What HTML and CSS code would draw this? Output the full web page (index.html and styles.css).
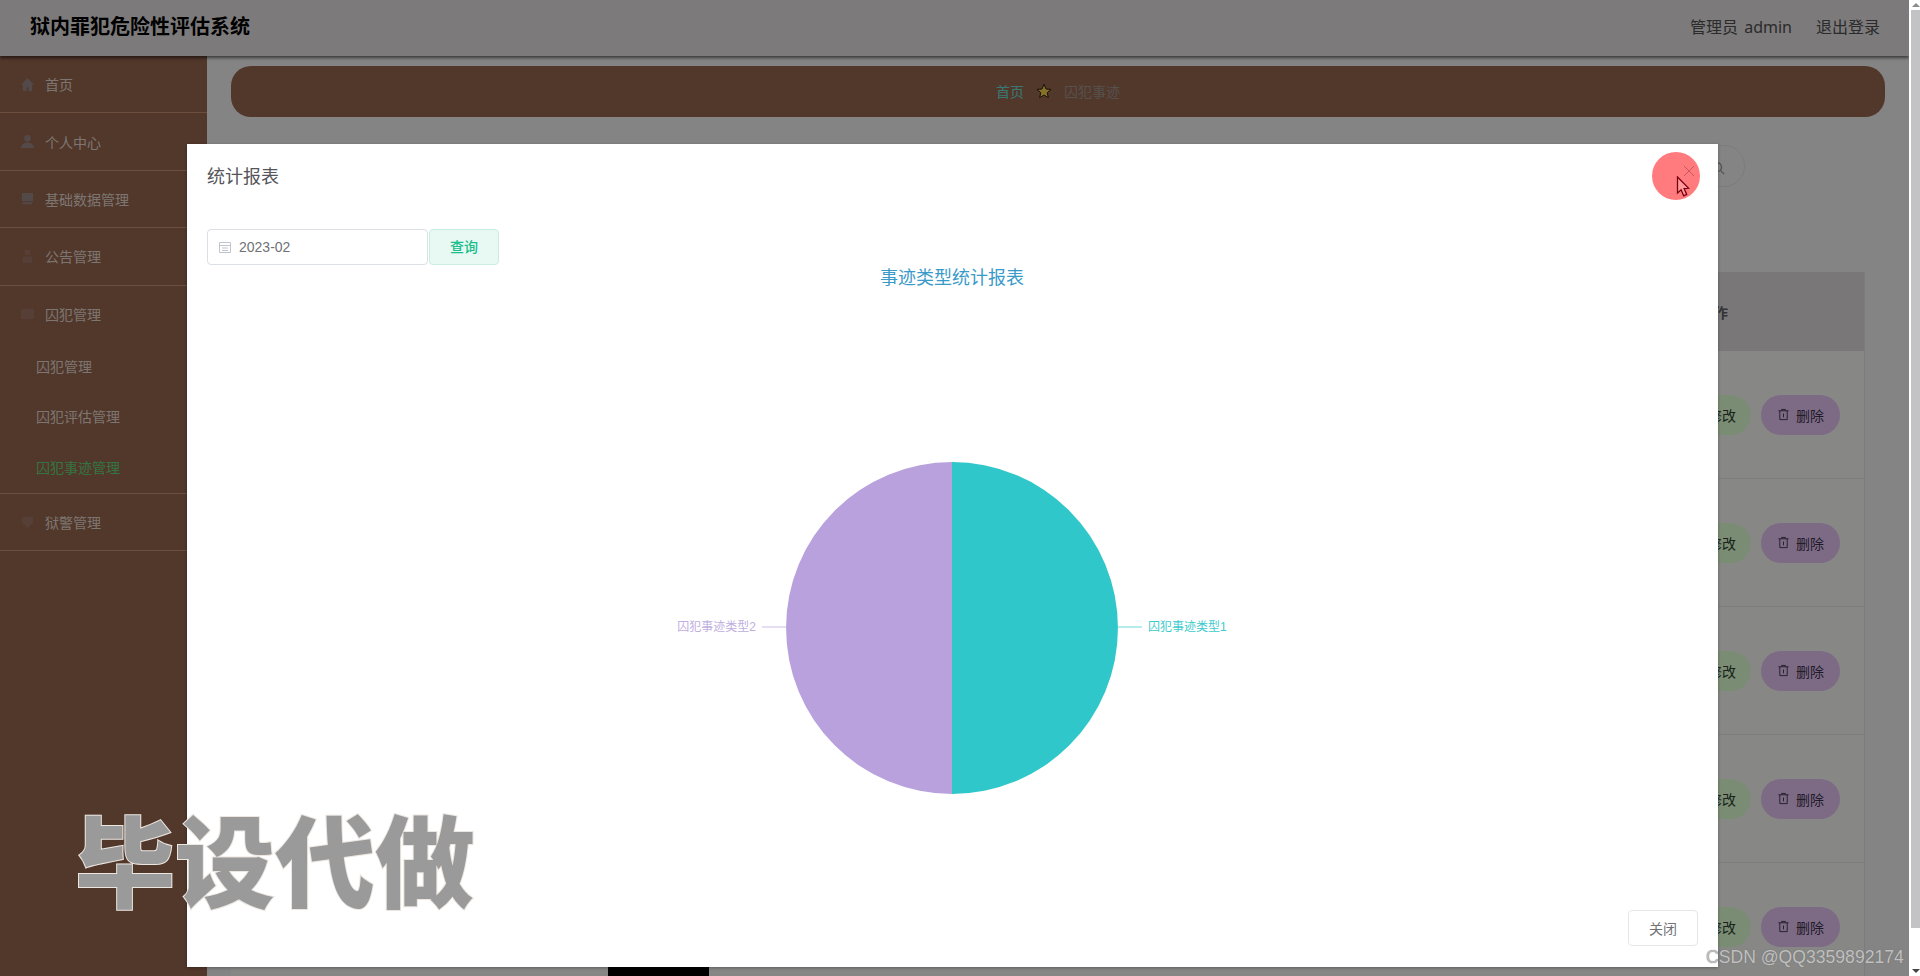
FILE: index.html
```html
<!DOCTYPE html>
<html lang="zh-CN">
<head>
<meta charset="utf-8">
<title>狱内罪犯危险性评估系统</title>
<link rel="stylesheet" href="styles.css">
</head>
<body>
<div class="window">
  <div class="viewport">
    <header class="topbar">
      <div class="brand">狱内罪犯危险性评估系统</div>
      <div class="user"><span>管理员 admin</span><span>退出登录</span></div>
    </header>
    <div class="shell">
      <aside class="sidebar">
        <div class="nav-item"><svg class="nav-icon icon-blue" viewBox="0 0 16 16"><path d="M8 1 1 8h2v7h4v-4h2v4h4V8h2z"/></svg>首页</div>
        <div class="nav-item"><svg class="nav-icon icon-blue" viewBox="0 0 16 16"><circle cx="8" cy="4.5" r="3.5"/><path d="M1 15c0-4 3-6 7-6s7 2 7 6z"/></svg>个人中心</div>
        <div class="nav-item"><svg class="nav-icon icon-blue" viewBox="0 0 16 16"><path d="M2 2h12v9H2zM3 12h10v2H3z"/></svg>基础数据管理</div>
        <div class="nav-item"><svg class="nav-icon icon-dark" viewBox="0 0 16 16"><path d="M5 1h6v5H5zM3 8h10v7H3z"/></svg>公告管理</div>
        <div class="nav-group">
          <div class="nav-head"><svg class="nav-icon icon-dark" viewBox="0 0 16 16"><path d="M1 3h14v11H1z"/></svg>囚犯管理</div>
          <div class="nav-sub">囚犯管理</div>
          <div class="nav-sub">囚犯评估管理</div>
          <div class="nav-sub nav-sub-active">囚犯事迹管理</div>
        </div>
        <div class="nav-item"><svg class="nav-icon icon-dark" viewBox="0 0 16 16"><path d="M2 2h12v6l-6 6-6-6z"/></svg>狱警管理</div>
      </aside>
      <main class="content">
        <nav class="crumbs">
          <span class="crumb-home">首页</span>
          <svg class="crumb-star" viewBox="0 0 16 16"><path d="M8 1.2 10 6l5 .4-3.8 3.3 1.2 5L8 12l-4.4 2.7 1.2-5L1 6.4 6 6z"/></svg>
          <span class="crumb-page">囚犯事迹</span>
        </nav>
        <div class="search-row">
          <button class="search-btn"><svg class="search-icon" viewBox="0 0 16 16"><circle cx="7" cy="7" r="5"/><path d="m11 11 4 4"/></svg></button>
        </div>
        <div class="table">
          <div class="table-head"><span class="col-ops">操作</span></div>
          <div class="table-row"><div class="ops"><button class="pill pill-green">修改</button><button class="pill pill-purple"><svg class="trash" viewBox="0 0 14 14"><path d="M1.5 3h11M5 3V1.5h4V3M3 3v9.5h8V3M7 6v4"/></svg>删除</button></div></div>
          <div class="table-row"><div class="ops"><button class="pill pill-green">修改</button><button class="pill pill-purple"><svg class="trash" viewBox="0 0 14 14"><path d="M1.5 3h11M5 3V1.5h4V3M3 3v9.5h8V3M7 6v4"/></svg>删除</button></div></div>
          <div class="table-row"><div class="ops"><button class="pill pill-green">修改</button><button class="pill pill-purple"><svg class="trash" viewBox="0 0 14 14"><path d="M1.5 3h11M5 3V1.5h4V3M3 3v9.5h8V3M7 6v4"/></svg>删除</button></div></div>
          <div class="table-row"><div class="ops"><button class="pill pill-green">修改</button><button class="pill pill-purple"><svg class="trash" viewBox="0 0 14 14"><path d="M1.5 3h11M5 3V1.5h4V3M3 3v9.5h8V3M7 6v4"/></svg>删除</button></div></div>
          <div class="table-row"><div class="ops"><button class="pill pill-green">修改</button><button class="pill pill-purple"><svg class="trash" viewBox="0 0 14 14"><path d="M1.5 3h11M5 3V1.5h4V3M3 3v9.5h8V3M7 6v4"/></svg>删除</button></div></div>
        </div>
      </main>
    </div>
    <div class="black-strip"></div>
    <div class="overlay"></div>
    <section class="modal">
      <div class="modal-title">统计报表</div>
      <div class="modal-form">
        <div class="date-input">
          <svg class="cal-icon" viewBox="0 0 14 14"><path d="M1.5 2.5h11v10h-11zM1.5 5.5h11M4 8h6M4 10.5h6"/></svg>
          <span>2023-02</span>
        </div>
        <button class="query-btn">查询</button>
      </div>
      <div class="chart-wrap">
        <svg class="chart" viewBox="0 0 1491 640" width="1491" height="640">
          <text class="chart-title" x="745" y="19" text-anchor="middle">事迹类型统计报表</text>
          <path class="slice-purple" d="M745 197a166 166 0 0 0 0 332z"/>
          <path class="slice-teal" d="M745 197a166 166 0 0 1 0 332z"/>
          <path class="line-purple" d="M555 362h24"/>
          <path class="line-teal" d="M911 362h24"/>
          <text class="label-purple" x="549" y="366" text-anchor="end">囚犯事迹类型2</text>
          <text class="label-teal" x="941" y="366">囚犯事迹类型1</text>
        </svg>
      </div>
      <div class="modal-footer"><button class="close-btn">关闭</button></div>
    </section>
    <div class="click-halo">
      <svg class="close-x" viewBox="0 0 12 12"><path d="m1 1 10 10M11 1 1 11"/></svg>
      <svg class="cursor" viewBox="0 0 14 22"><path d="M1.5 1v16l3.6-3.2 2.6 6 3-1.4-2.6-5.8 4.6-.3z"/></svg>
    </div>
    <div class="promo">毕设代做</div>
    <div class="csdn">CSDN @QQ3359892174</div>
  </div>
  <div class="scrollbar">
    <span class="arrow arrow-up"></span>
    <div class="thumb"></div>
    <span class="arrow arrow-down"></span>
  </div>
</div>
</body>
</html>
```
FILE: styles.css
```css
* { box-sizing: border-box; }
html, body { margin: 0; height: 100%; overflow: hidden; }
body { font-family: "Liberation Sans", "Noto Sans CJK SC", sans-serif; background: #fff; }
button { font-family: inherit; }

.window { display: flex; width: 1920px; height: 976px; }
.viewport { position: relative; width: 1909px; height: 976px; overflow: hidden; background: #dcdcdc; display: flex; flex-direction: column; }

.scrollbar { width: 11px; padding-left: 2px; background: #fff; display: flex; flex-direction: column; align-items: center; }
.thumb { width: 9px; height: 918px; background: #c3c3c6; }
.arrow { width: 0; height: 0; border-left: 4px solid transparent; border-right: 4px solid transparent; }
.arrow-up { margin: 3px 0 3px; border-bottom: 4px solid #8c8c8c; }
.arrow-down { margin-top: auto; margin-bottom: 3px; border-top: 4px solid #444; }

.topbar { position: relative; z-index: 1; flex: none; height: 56px; padding: 0 29px 5px 30px; display: flex; align-items: center; justify-content: space-between; background: #cfcccd; box-shadow: 0 2px 3px rgba(0,0,0,.55); }
.brand { font-size: 20px; font-weight: 700; color: #000; }
.user { display: flex; gap: 24px; font-family: "Noto Sans", "Noto Sans CJK SC", sans-serif; font-size: 16px; word-spacing: 2px; color: #484848; }

.shell { flex: 1; display: flex; min-height: 0; }
.sidebar { flex: none; width: 207px; background: #895c48; color: #cfc4bd; font-size: 14px; }
.nav-item { height: 57.4px; display: flex; align-items: center; padding-left: 20px; border-bottom: 1px solid #b58269; }
.nav-group { border-bottom: 1px solid #b58269; }
.nav-head { height: 56px; display: flex; align-items: center; padding-left: 20px; }
.nav-icon { width: 15px; height: 15px; margin-right: 10px; flex: none; }
.icon-blue { fill: #8a7a78; }
.icon-dark { fill: #90695a; }
.nav-sub { height: 50.5px; line-height: 51px; padding-left: 36px; }
.nav-sub-active { color: #55c46e; }

.content { flex: 1; min-width: 0; padding: 10px 24px 0; }
.crumbs { height: 51px; padding-bottom: 2px; display: flex; align-items: center; justify-content: center; gap: 12px; border-radius: 20px; background: #895c48; font-size: 14px; }
.crumb-home { color: #5fc8c2; }
.crumb-star { width: 16px; height: 16px; fill: #e0bd45; stroke: #2a1a10; stroke-width: 1; }
.crumb-page { color: #8f8783; }

.search-row { display: flex; justify-content: flex-end; margin-top: 28px; padding-right: 140px; }
.search-btn { width: 60px; height: 42px; padding: 4px 0 0 6px; display: flex; align-items: center; justify-content: center; border: 1px solid #cfcfcf; border-radius: 21px; background: transparent; }
.search-icon { width: 14px; height: 14px; fill: none; stroke: #8a8a8a; stroke-width: 1.6; }

.table { width: 1634px; margin-top: 85px; background: #e1e1df; border-right: 1px solid #cfcfcf; }
.table-head { height: 79px; display: flex; align-items: center; justify-content: flex-end; background: #cbc6c8; color: #555; font-size: 14px; }
.col-ops { width: 300px; text-align: center; font-weight: 700; }
.table-row { height: 128px; padding-top: 44px; border-bottom: 1px solid #d0d0d0; }
.ops { display: flex; justify-content: flex-end; gap: 10px; padding-right: 24px; }
.pill { height: 40px; padding-bottom: 2px; display: flex; align-items: center; justify-content: center; border: 0; border-radius: 20px; font-size: 14px; }
.pill-green { width: 92px; padding-left: 40px; background: #cdeac4; color: #2a3a2a; }
.pill-purple { width: 79px; background: #d0b2e0; color: #3a2e44; }
.trash { width: 13px; height: 13px; margin-right: 6px; fill: none; stroke: #3a2e44; stroke-width: 1; }

.black-strip { position: absolute; left: 608px; top: 966px; width: 101px; height: 10px; background: #000; }

.overlay { position: absolute; inset: 0; z-index: 2; background: rgba(0,0,0,.4); }

.modal { position: absolute; z-index: 3; left: 187px; top: 144px; width: 1531px; height: 823px; padding: 0 20px; display: flex; flex-direction: column; background: #fff; box-shadow: 0 1px 3px rgba(0,0,0,.3); }
.modal-title { flex: none; height: 32px; margin-top: 17px; font-size: 18px; line-height: 32px; color: #55555a; }
.modal-form { flex: none; display: flex; margin-top: 36px; height: 36px; }
.date-input { width: 221px; height: 36px; display: flex; align-items: center; padding-left: 10px; border: 1px solid #dcdfe6; border-radius: 4px; font-size: 14px; color: #707276; }
.cal-icon { width: 14px; height: 14px; margin-right: 7px; fill: none; stroke: #c0c4cc; stroke-width: 1; }
.query-btn { width: 70px; height: 36px; padding: 0 0 2px; margin-left: 1px; border: 1px solid #c9eee1; border-radius: 4px; background: #e8f8f3; color: #19be8c; font-size: 14px; font-weight: 500; }
.chart-wrap { flex: 1; min-height: 0; overflow: hidden; }
.chart { display: block; }
.chart-title { font-size: 18px; fill: #3a9ac9; }
.slice-purple { fill: #b8a1dc; }
.slice-teal { fill: #2fc7c9; }
.line-purple { stroke: #b8a1dc; fill: none; stroke-opacity: .7; }
.line-teal { stroke: #2fc7c9; fill: none; stroke-opacity: .7; }
.label-purple { font-size: 12px; fill: #bfaee0; }
.label-teal { font-size: 12px; fill: #3ccbcd; }
.modal-footer { flex: none; display: flex; justify-content: flex-end; height: 57px; }
.close-btn { width: 70px; height: 36px; border: 1px solid #e6e6e6; border-radius: 4px; background: #fff; color: #707276; font-size: 14px; }

.click-halo { position: absolute; z-index: 4; left: 1652px; top: 152px; width: 48px; height: 48px; border-radius: 50%; background: #ff7b7e; }
.close-x { position: absolute; left: 31px; top: 13px; width: 12px; height: 12px; fill: none; stroke: #c9585e; stroke-width: 1; }
.cursor { position: absolute; left: 24px; top: 24px; width: 14px; height: 22px; fill: #ff9a9c; stroke: #7a0010; stroke-width: 1.3; }

.promo { position: absolute; z-index: 5; left: 75px; top: 787px; font-family: "Noto Sans CJK SC", sans-serif; font-size: 100px; font-weight: 900; line-height: 140px; color: #9a9a9a; -webkit-text-stroke: 2px #ece6e0; paint-order: stroke fill; white-space: nowrap; }
.csdn { position: absolute; z-index: 5; left: 1706px; top: 947px; font-size: 17.6px; line-height: 20px; color: #c0c0c0; text-shadow: 0 0 1px #666; white-space: nowrap; }
```
